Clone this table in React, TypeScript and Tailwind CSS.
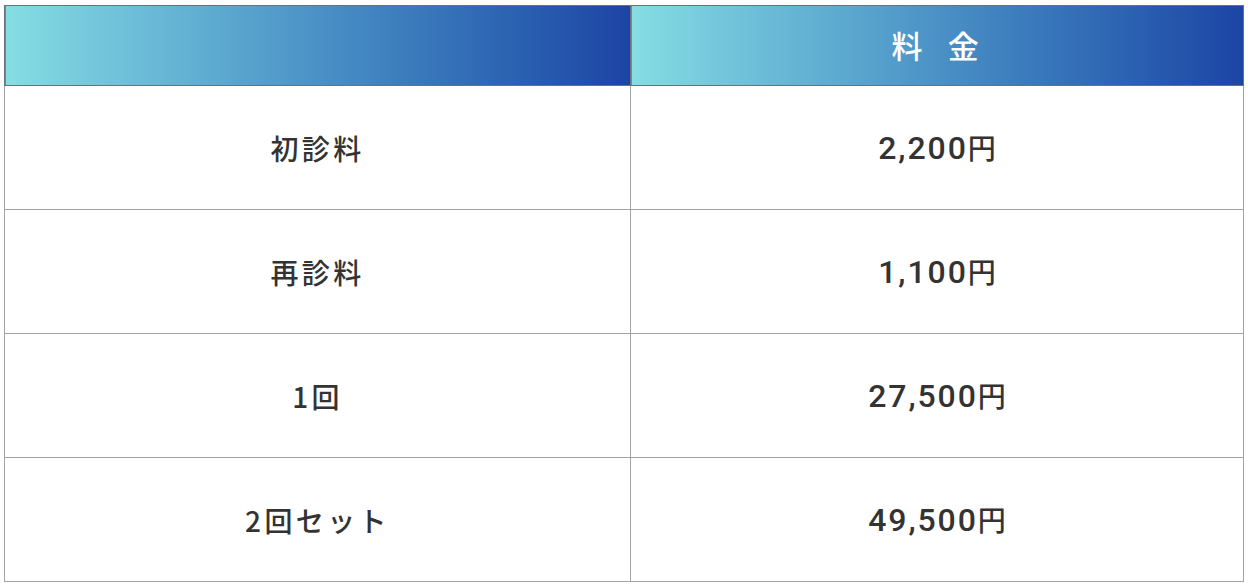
const rows = [
  { name: "初診料", price: "2,200" },
  { name: "再診料", price: "1,100" },
  { name: "1回", price: "27,500" },
  { name: "2回セット", price: "49,500" },
];

const jp = "font-['Noto_Sans_CJK_JP',sans-serif]";

export default function App() {
  return (
    <div className="w-[1248px] h-[584px] bg-white pt-[5px] pl-[4px]">
      <table className="w-[1240px] border-collapse table-fixed">
        <colgroup>
          <col className="w-[626px]" />
          <col />
        </colgroup>
        <thead>
          <tr className="h-[80px]">
            <th className="border border-[#66737d] bg-gradient-to-r from-[#86dde3] to-[#1d44a4]" />
            <th
              className={`border border-[#66737d] bg-gradient-to-r from-[#86dde3] to-[#1d44a4] text-white text-[31px] font-medium tracking-[0.12em] ${jp}`}
            >
              料&nbsp;&nbsp;金
            </th>
          </tr>
        </thead>
        <tbody>
          {rows.map((r) => (
            <tr key={r.name} className="h-[124px]">
              <td
                className={`border border-[#a3a3a3] text-center text-[#333] text-[28px] font-medium tracking-[0.12em] ${jp}`}
              >
                {r.name}
              </td>
              <td className="border border-[#a3a3a3] text-center text-[#333] font-medium">
                <span className="font-['Roboto',sans-serif] text-[32px] tracking-[0.06em]">
                  {r.price}
                </span>
                <span className={`text-[28px] ${jp}`}>円</span>
              </td>
            </tr>
          ))}
        </tbody>
      </table>
    </div>
  );
}
